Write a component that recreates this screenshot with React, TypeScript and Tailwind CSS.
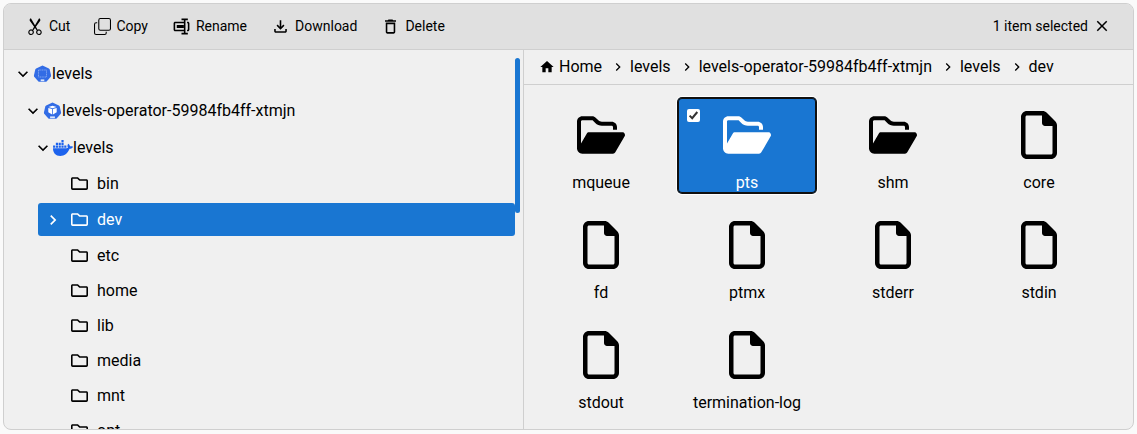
import type { ReactNode } from "react";
import type { IconType } from "react-icons";
import { BsCopy, BsScissors } from "react-icons/bs";
import { BiRename } from "react-icons/bi";
import {
  MdClear,
  MdHome,
  MdKeyboardArrowDown,
  MdKeyboardArrowRight,
  MdOutlineDelete,
  MdOutlineFileDownload,
  MdOutlineNavigateNext,
} from "react-icons/md";
import { FaRegFile, FaRegFolderOpen } from "react-icons/fa6";
import { FaRegFolder } from "react-icons/fa";

const actions: { label: string; Icon: IconType; size: number }[] = [
  { label: "Cut", Icon: BsScissors, size: 18 },
  { label: "Copy", Icon: BsCopy, size: 17 },
  { label: "Rename", Icon: BiRename, size: 19 },
  { label: "Download", Icon: MdOutlineFileDownload, size: 19 },
  { label: "Delete", Icon: MdOutlineDelete, size: 19 },
];

const folders = ["bin", "dev", "etc", "home", "lib", "media", "mnt", "opt"];

const crumbs = ["levels", "levels-operator-59984fb4ff-xtmjn", "levels", "dev"];

const entries: { name: string; folder?: boolean; selected?: boolean }[] = [
  { name: "mqueue", folder: true },
  { name: "pts", folder: true, selected: true },
  { name: "shm", folder: true },
  { name: "core" },
  { name: "fd" },
  { name: "ptmx" },
  { name: "stderr" },
  { name: "stdin" },
  { name: "stdout" },
  { name: "termination-log" },
];

function Heptagon({ children }: { children: ReactNode }) {
  return (
    <svg width="18" height="18" viewBox="0 0 18 18" className="mr-px ml-px shrink-0 -translate-x-[0.5px]">
      <path
        d="M9 .6 15.4 3.4Q16 3.7 16.2 4.4L17.6 10.6Q17.7 11.3 17.3 11.8L13.3 16.3Q12.8 16.8 12.1 16.8H5.9Q5.2 16.8 4.7 16.3L.7 11.8Q.3 11.3.4 10.6L1.8 4.4Q2 3.7 2.6 3.4Z"
        fill="#326ce5"
      />
      {children}
    </svg>
  );
}

function NamespaceIcon() {
  return (
    <Heptagon>
      <rect x="5" y="5" width="8" height="7" fill="none" stroke="#8fb0f2" strokeWidth=".8" strokeDasharray="1.2 .5" />
      <rect x="7.2" y="14.4" width="3.6" height="1.8" fill="#dce7fc" />
    </Heptagon>
  );
}

function PodIcon() {
  return (
    <Heptagon>
      <path d="M9 3.8 13 5 9 6.3 5 5Z" fill="#fff" />
      <path d="M4.8 5.9 8.6 7.1V12.4L4.8 10.3Z" fill="#fff" />
      <path d="M13.2 5.9 9.4 7.1V12.4L13.2 10.3Z" fill="#fff" />
      <rect x="6.6" y="14.4" width="4.8" height="1.8" fill="#dce7fc" />
    </Heptagon>
  );
}

function DockerIcon() {
  return (
    <svg width="20" height="16" viewBox="0 0 756 597" fill="#1d63ed" className="shrink-0">
      <path d="M743.96 245.25c-18.54-12.48-67.26-17.81-102.68-8.27-1.91-35.28-20.1-65.01-53.38-90.95l-12.32-8.27-8.21 12.4c-16.14 24.5-22.94 57.14-20.53 86.81 1.9 18.28 8.26 38.83 20.53 53.74-46.1 26.74-88.59 20.67-276.77 20.67H.06c-.85 42.49 5.98 124.23 57.96 190.77 5.74 7.35 12.04 14.46 18.87 21.31 42.26 42.32 106.11 73.35 201.59 73.44 145.66.13 270.46-78.6 346.37-268.97 24.98.41 90.92 4.48 123.19-57.88.79-1.05 8.21-16.54 8.21-16.54z" />
      <path d="M2.4 206.4h81.7v81.7H2.4zM107.95 206.4h81.7v81.7h-81.7zM213.5 206.4h81.7v81.7h-81.7zM319.05 206.4h81.7v81.7h-81.7zM424.6 206.4h81.7v81.7h-81.7zM107.95 103.2h81.7v81.7h-81.7zM213.5 103.2h81.7v81.7h-81.7zM319.05 103.2h81.7v81.7h-81.7zM319.05 0h81.7v81.7h-81.7z" />
    </svg>
  );
}

function Toolbar() {
  return (
    <div className="flex h-[46px] shrink-0 items-center border-b border-[#cfcfcf] bg-[#e0e0e0] pr-[22px] pb-px pl-[10px] text-sm">
      {actions.map(({ label, Icon, size }) => (
        <button key={label} className="flex items-center gap-[5px] px-3">
          <Icon size={size} />
          {label}
        </button>
      ))}
      <button className="ml-auto flex items-center gap-[5px]">
        1 item selected
        <MdClear size={18} />
      </button>
    </div>
  );
}

function Sidebar() {
  return (
    <div className="flex w-[520px] shrink-0 justify-between overflow-hidden border-r border-[#cfcfcf] pr-[3px] pl-[9px]">
      <div className="flex w-[502px] flex-col pt-[5px]">
        <div className="flex h-[37px] shrink-0 items-center">
          <MdKeyboardArrowDown size={20} />
          <NamespaceIcon />
          <span className="-ml-px">levels</span>
        </div>
        <div className="flex h-[37px] shrink-0 items-center pl-[10px]">
          <MdKeyboardArrowDown size={20} />
          <PodIcon />
          <span className="-ml-px">levels-operator-59984fb4ff-xtmjn</span>
        </div>
        <div className="flex h-[37px] shrink-0 items-center pl-5">
          <MdKeyboardArrowDown size={20} />
          <DockerIcon />
          <span>levels</span>
        </div>
        {folders.map((name) =>
          name === "dev" ? (
            <div key={name} className="flex h-[37px] shrink-0 items-center pl-[25px]">
              <div className="flex h-[33px] w-full items-center rounded-[3px] bg-[#1976d2] pl-[5px] text-white">
                <MdKeyboardArrowRight size={20} />
                <FaRegFolder size={17} className="mr-[9px] ml-2" />
                {name}
              </div>
            </div>
          ) : (
            <div key={name} className="flex h-[35px] shrink-0 items-center pl-[58px]">
              <FaRegFolder size={17} className="mr-[9px]" />
              {name}
            </div>
          ),
        )}
      </div>
      <div className="mt-2 h-[155px] w-[5px] rounded-full bg-[#1976d2]" />
    </div>
  );
}

function Breadcrumb() {
  return (
    <div className="flex h-[35px] shrink-0 items-center border-b border-[#cfcfcf] pl-[15px]">
      <MdHome size={16} className="mr-1" />
      Home
      {crumbs.map((crumb, i) => (
        <div key={i} className="flex items-center">
          <MdOutlineNavigateNext size={16} className="mr-1 ml-2" />
          {crumb}
        </div>
      ))}
    </div>
  );
}

function Entry({ name, folder, selected }: { name: string; folder?: boolean; selected?: boolean }) {
  const Icon = folder ? FaRegFolderOpen : FaRegFile;
  return (
    <div
      className={
        selected
          ? "relative flex h-[95px] flex-col items-center rounded-[4px] bg-[#1976d2] pt-[13px] text-white shadow-[0_0_0_1px_#101010,0_0_0_2px_#fff] ring-1 ring-[#101010] ring-inset"
          : "relative flex h-[95px] flex-col items-center pt-[13px]"
      }
    >
      {selected && (
        <span className="absolute top-[11px] left-[9px] flex size-[13px] items-center justify-center rounded-[2px] bg-white">
          <svg width="11" height="11" viewBox="0 0 11 11">
            <path d="M1.6 5.6 4.2 8.2 9.3 2" fill="none" stroke="#333" strokeWidth="2" />
          </svg>
        </span>
      )}
      <Icon size={48} />
      <span className="mt-[13px] leading-[21px]">{name}</span>
    </div>
  );
}

export default function App() {
  return (
    <div className="h-[434px] w-[1137px] overflow-hidden bg-[#fafafa] px-[3px] pt-[3px] font-['Roboto',sans-serif] text-base leading-6 text-black">
      <div className="flex h-[427px] flex-col overflow-hidden rounded-lg border border-[#cfcfcf] bg-[#f0f0f0]">
        <Toolbar />
        <div className="flex min-h-0 grow">
          <Sidebar />
          <div className="flex min-w-0 grow flex-col">
            <Breadcrumb />
            <div className="grid grid-cols-[repeat(4,138px)] gap-x-2 gap-y-[15px] pt-[13px] pl-[8px]">
              {entries.map((entry) => (
                <Entry key={entry.name} {...entry} />
              ))}
            </div>
          </div>
        </div>
      </div>
    </div>
  );
}
